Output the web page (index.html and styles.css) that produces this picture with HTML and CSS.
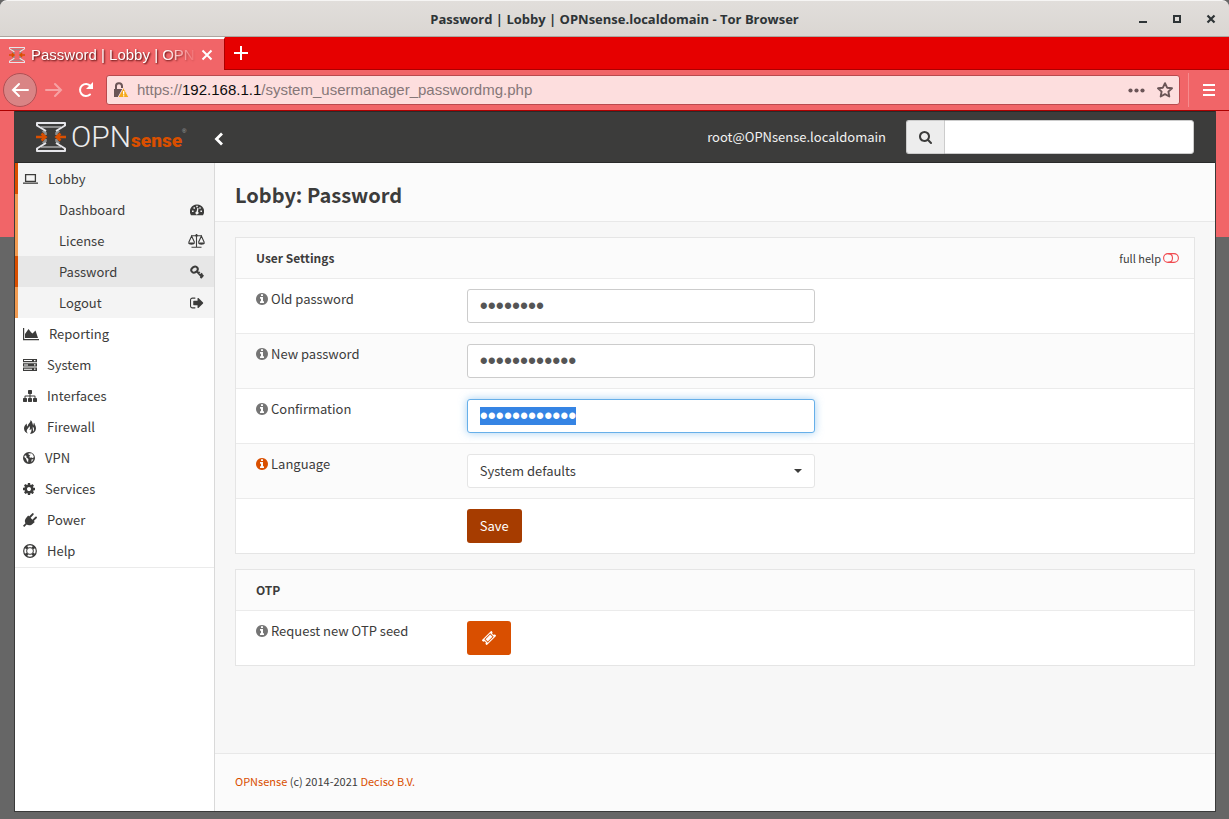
FILE: index.html
```
<!DOCTYPE html>
<html lang="en">
<head>
<meta charset="utf-8">
<meta name="viewport" content="width=device-width, initial-scale=1">
<title>Password | Lobby | OPNsense.localdomain</title>
<link rel="stylesheet" href="styles.css">
</head>
<body>
<svg class="defs" aria-hidden="true">
  <symbol id="mark" viewBox="0 0 30 30">
    <g fill="none">
      <path stroke="#8d8d8d" stroke-width="2" d="M5 5h20M5 25h20"/>
      <path stroke="#8d8d8d" stroke-width="2.600" d="M9.500 13V11L7 8.500M20.500 13V11L23 8.500M9.500 17V19L7 21.500M20.500 17V19l2.500 2.500"/>
      <path stroke="#e6e6ea" stroke-width="2" stroke-linejoin="round" d="M10 9L1 3.500V1h28v2.500L20 9M10 21l-9 5.500V29h28v-2.500L20 21"/>
      <path stroke="#d94f00" stroke-width="2.600" d="M0 15h9M30 15h-9M5.500 11.500L9.500 15l-4 3.500M24.500 11.500l-4 3.500 4 3.500"/>
    </g>
  </symbol>
  <symbol id="info" viewBox="128 128 1536 1536"><path d="M1152 1376v-160q0-14-9-23t-23-9h-96v-512q0-14-9-23t-23-9h-320q-14 0-23 9t-9 23v160q0 14 9 23t23 9h96v320h-96q-14 0-23 9t-9 23v160q0 14 9 23t23 9h448q14 0 23-9t9-23zm-128-896v-160q0-14-9-23t-23-9h-192q-14 0-23 9t-9 23v160q0 14 9 23t23 9h192q14 0 23-9t9-23zm640 416q0 209-103 385.500t-279.500 279.500-385.500 103-385.500-103-279.500-279.500-103-385.500 103-385.500 279.500-279.500 385.500-103 385.500 103 279.500 279.500 103 385.500z"/></symbol>
</svg>

<div class="window">
  <header class="titlebar">
    <span class="titlebar-text">Password | Lobby | OPNsense.localdomain - Tor Browser</span>
    <div class="window-buttons">
      <button aria-label="Minimize"><svg width="10" height="10" viewBox="0 0 10 10"><path d="M1 7h8v2H1z"/></svg></button>
      <button aria-label="Maximize"><svg width="10" height="10" viewBox="0 0 10 10"><path fill-rule="evenodd" d="M1 1h8v8H1zM3 3v4h4V3z"/></svg></button>
      <button aria-label="Close window"><svg width="10" height="10" viewBox="0 0 10 10"><path fill="none" stroke="#2e3436" stroke-width="2.200" d="M1.500 1.500l7 7M8.500 1.500l-7 7"/></svg></button>
    </div>
  </header>

  <div class="tabs">
    <div class="tab">
      <svg width="16" height="16"><use href="#mark"/></svg>
      <span class="tab-title">Password | Lobby | OPN</span>
      <button class="tab-button" aria-label="Close tab"><svg width="12" height="12" viewBox="0 0 12 12"><path d="M1.500 1.500l9 9M10.500 1.500l-9 9"/></svg></button>
    </div>
    <button class="tab-button tab-new" aria-label="New tab"><svg width="14" height="14" viewBox="0 0 14 14"><path d="M7 0v14M0 7h14"/></svg></button>
  </div>

  <nav class="toolbar" aria-label="Browser">
    <button class="tool back" aria-label="Back"><svg width="18" height="16" viewBox="0 0 18 16"><path d="M17 8H2M8 2L2 8l6 6"/></svg></button>
    <button class="tool forward" aria-label="Forward"><svg width="18" height="16" viewBox="0 0 18 16"><path d="M1 8h15M10 2l6 6-6 6"/></svg></button>
    <button class="tool reload" aria-label="Reload"><svg width="16" height="16" viewBox="0 0 16 16"><path d="M12 12.500a6 6 0 1 1 .5-8.500"/><path class="solid" d="M15 0v7H8z"/></svg></button>
    <div class="address">
      <svg width="16" height="16" viewBox="0 0 16 16"><path fill="none" stroke="#6b5557" stroke-width="2" d="M3 8V4.500a3 3 0 0 1 6-.5v2"/><path fill="#6b5557" d="M1 7h9v8H1z"/><path fill="#f5a91b" stroke="#fbdddd" d="M10.500 5.500L16 15.500H5z"/><path fill="#fff" d="M10 9h1.300v3.500H10zM10 13.300h1.300v1.200H10z"/></svg>
      <span class="url">https://<b>192.168.1.1</b>/system_usermanager_passwordmg.php</span>
      <button class="address-button" aria-label="Page actions"><svg width="17" height="5" viewBox="0 0 17 5"><circle cx="2.500" cy="2.500" r="2.100"/><circle cx="8.500" cy="2.500" r="2.100"/><circle cx="14.500" cy="2.500" r="2.100"/></svg></button>
      <button class="address-button" aria-label="Bookmark"><svg width="16" height="16" viewBox="0 0 16 16"><path fill="none" stroke="#6b5557" stroke-width="1.900" stroke-linejoin="round" d="M8 1.200l2.100 4.500 4.900.6-3.600 3.300.9 4.900L8 12.100l-4.300 2.400.9-4.900L1 6.300l4.900-.6z"/></svg></button>
    </div>
    <button class="tool menu" aria-label="Menu"><svg width="12" height="12" viewBox="0 0 12 12"><path d="M0 1h12M0 6h12M0 11h12"/></svg></button>
  </nav>

  <div class="viewport">
    <div class="page">
      <header class="topbar">
        <a class="brand" href="#" aria-label="OPNsense">
          <svg width="30" height="30"><use href="#mark"/></svg>
          <span class="brand-opn">OPN</span><span class="brand-sense">sense</span><sup class="brand-reg">®</sup>
        </a>
        <button class="collapse" aria-label="Collapse menu"><svg width="10" height="14" viewBox="0 0 10 14"><path fill="none" stroke="#fff" stroke-width="2.800" d="M8 1.500L2.500 7 8 12.500"/></svg></button>
        <span class="account">root@OPNsense.localdomain</span>
        <form class="search">
          <label for="search" aria-label="Search"><svg width="13" height="13" viewBox="64 128 1664 1664"><path d="M1216 832q0-185-131.500-316.500t-316.500-131.500-316.500 131.500-131.500 316.500 131.500 316.500 316.500 131.500 316.500-131.500 131.500-316.500zm512 832q0 52-38 90t-90 38q-54 0-90-38l-343-342q-179 124-399 124-143 0-273.500-55.500t-225-150-150-225-55.500-273.500 55.500-273.500 150-225 225-150 273.500-55.500 273.500 55.500 225 150 150 225 55.500 273.500q0 220-124 399l343 343q37 37 37 90z"/></svg></label>
          <input id="search" type="text">
        </form>
      </header>

      <div class="columns">
        <nav class="sidebar" aria-label="Main">
          <a class="item open" href="#"><svg width="15" height="14" viewBox="0 0 15 14"><path fill="none" stroke="#3c3c3b" stroke-width="1.300" d="M2.600 2.600h9.800v6.800H2.600z"/><path d="M0 10.500h15v1.300H0z"/></svg>Lobby</a>
          <div class="submenu">
            <a href="#">Dashboard<svg width="14" height="14" viewBox="0 0 14 14"><path fill-rule="evenodd" d="M7 1.500a7 7 0 0 1 6 10.800H1A7 7 0 0 1 7 1.500zM2 7.500v1.600h1.600V7.500zM3.500 4.300v1.500h1.500V4.300zM6.200 2.700v1.500h1.600V2.700zM10.400 7.500v1.600H12V7.500zM9.300 4.300v1.500h1.400V4.300zM7.300 5L6.600 8.500A1.500 1.500 0 1 0 8 8.800L8.500 5z"/></svg></a>
            <a class="wide" href="#">License<svg width="17" height="14" viewBox="0 0 17 14"><path fill="none" stroke="#3c3c3b" stroke-width="1.100" d="M8.500 0v13M3 1.700h11M3.500 13.300h10M.7 8.500L3.600 2l3 6.500M10.400 8.500l3-6.500 2.900 6.500"/><path d="M0 8.500h7c0 3-7 3-7 0zM10 8.500h7c0 3-7 3-7 0z"/><circle cx="8.500" cy="1.500" r="1.200"/></svg></a>
            <a class="current" href="#">Password<svg width="14" height="14" viewBox="0 0 14 14"><ellipse cx="4.500" cy="4.600" rx="3.400" ry="2.700" transform="rotate(-35 4.500 4.600)" fill="none" stroke="#3c3c3b" stroke-width="2"/><path fill="none" stroke="#3c3c3b" stroke-width="1.900" d="M6.500 6.200l6 6.300M12.200 8.300l-2 2M9.700 7l-1.500 1.500M10.500 13l2.800-3"/></svg></a>
            <a href="#">Logout<svg width="14" height="14" viewBox="64 128 1664 1536"><path d="M704 1440q0 4 1 20t.5 26.500-3 23.500-10 19.500-20.500 6.500h-320q-119 0-203.500-84.500t-84.500-203.500v-704q0-119 84.500-203.500t203.500-84.500h320q13 0 22.500 9.500t9.500 22.500q0 4 1 20t.5 26.500-3 23.500-10 19.500-20.500 6.500h-320q-66 0-113 47t-47 113v704q0 66 47 113t113 47h312l11.500 1 11.500 3 8 5.500 7 9 2 13.500zm928-544q0 26-19 45l-544 544q-19 19-45 19t-45-19-19-45v-288h-448q-26 0-45-19t-19-45v-384q0-26 19-45t45-19h448v-288q0-26 19-45t45-19 45 19l544 544q19 19 19 45z"/></svg></a>
          </div>
          <a class="item" href="#"><svg width="16" height="14" viewBox="0 0 16 14"><path d="M0 1h1.200v11H16v1.200H0zM2 11V7l3.500-5L8 5.200 9.500 6.500 12.500 3.500 15 11z"/></svg>Reporting</a>
          <a class="item" href="#"><svg width="14" height="14" viewBox="0 0 14 14"><path fill-rule="evenodd" d="M0 1h14v3.300H0zM1 2.100v1h8v-1zM11 2v1.200h1.500V2zM0 5.300h14v3.300H0zM1 6.400v1h4v-1zM11 6.300v1.200h1.500V6.300zM0 9.600h14v3.300H0zM1 10.700v1h8v-1zM11 10.600v1.200h1.500v-1.200z"/></svg>System</a>
          <a class="item" href="#"><svg width="14" height="14" viewBox="0 0 1792 1792"><path d="M1792 1248v320q0 40-28 68t-68 28h-320q-40 0-68-28t-28-68v-320q0-40 28-68t68-28h96v-192h-512v192h96q40 0 68 28t28 68v320q0 40-28 68t-68 28h-320q-40 0-68-28t-28-68v-320q0-40 28-68t68-28h96v-192h-512v192h96q40 0 68 28t28 68v320q0 40-28 68t-68 28h-320q-40 0-68-28t-28-68v-320q0-40 28-68t68-28h96v-192q0-52 38-90t90-38h512v-192h-96q-40 0-68-28t-28-68v-320q0-40 28-68t68-28h320q40 0 68 28t28 68v320q0 40-28 68t-68 28h-96v192h512q52 0 90 38t38 90v192h96q40 0 68 28t28 68z"/></svg>Interfaces</a>
          <a class="item" href="#"><svg width="14" height="14" viewBox="0 0 14 14"><path d="M7.500 0C8 2.500 4.500 4 4.700 6.500 3.700 6 3.600 4.700 4 3.500 2 4.700 1 6.500 1 8.500c0 2.800 1.800 4.300 4 5-1-1-1.500-2-1.200-3.300C4.200 8.700 6 8 6.200 6c1 1.200 1 2.600.2 4C7.500 10 8 9.200 8 8.200c1 1.600.5 3.700-1 5.500H8.500c2.600-.8 4.500-2.700 4.500-5.500 0-2.500-1.600-3.500-1.700-5.400-.8.600-1 1.500-.7 2.700C9.300 4.500 9.800 1.500 7.500 0zM9.800 6.500c1.500 1.500 1.700 3.500.2 5.300.2-1.800-.4-3-.2-5.300z"/></svg>Firewall</a>
          <a class="item" href="#"><svg width="12" height="14" viewBox="0 0 12 14"><path fill-rule="evenodd" d="M6 1a6 6 0 1 0 0 12A6 6 0 1 0 6 1zM2 4.200L3.600 5l-.4 1.200L5.400 8l-.3 3.400L3.900 10 3 7.500 1.200 6zM5.500 2.200L9 2.500l1.800 2.700-.6 2-1.600-.8-1.800.3-.4-1.600 1.200-1.300-1.800.2zM8.500 8.600l2-.4-2 3z"/></svg>VPN</a>
          <a class="item" href="#"><svg width="12" height="12" viewBox="128 128 1536 1536"><path d="M1152 896q0-106-75-181t-181-75-181 75-75 181 75 181 181 75 181-75 75-181zm512-109v222q0 12-8 23t-20 13l-185 28q-19 54-39 91 35 50 107 138 10 12 10 25t-9 23q-27 37-99 108t-94 71q-12 0-26-9l-138-108q-44 23-91 38-16 136-29 186-7 28-36 28h-222q-14 0-24.500-8.500t-11.500-21.500l-28-184q-49-16-90-37l-141 107q-10 9-25 9-14 0-25-11-126-114-165-168-7-10-7-23 0-12 8-23 15-21 51-66.500t54-70.500q-27-50-41-99l-183-27q-13-2-21-12.500t-8-23.500v-222q0-12 8-23t19-13l186-28q14-46 39-92-40-57-107-138-10-12-10-24 0-10 9-23 26-36 98.500-107.500t94.500-71.500q13 0 26 10l138 107q44-23 91-38 16-136 29-186 7-28 36-28h222q14 0 24.500 8.500t11.500 21.500l28 184q49 16 90 37l142-107q9-9 24-9 13 0 25 10 129 119 165 170 7 8 7 22 0 12-8 23-15 21-51 66.500t-54 70.500q26 50 41 98l183 28q13 2 21 12.500t8 23.500z"/></svg>Services</a>
          <a class="item" href="#"><svg width="14" height="14" viewBox="0 0 14 14"><path d="M3.500 4.500l6.300 6.200C8 12.600 5.300 12.600 3.700 11.500L1.200 14 0 12.800l2.500-2.500C1.500 8.500 1.600 6.300 3.500 4.500zM3.500 4.500l1.700-2 6.600 6.500-2 1.700z"/><path fill="none" stroke="#3c3c3b" stroke-width="1.900" stroke-linecap="round" d="M6.500 4.500l3.300-3.400M9.800 7.700l3.200-3.200"/></svg>Power</a>
          <a class="item" href="#"><svg width="14" height="14" viewBox="0 0 14 14"><g fill="none" stroke="#3c3c3b"><circle cx="7" cy="7" r="6.300" stroke-width="1.200"/><circle cx="7" cy="7" r="3.400" stroke-width="1"/><path stroke-width="3" d="M2.500 2.500l2 2M11.500 2.500l-2 2M2.500 11.500l2-2M11.500 11.500l-2-2"/></g></svg>Help</a>
        </nav>

        <main class="main">
          <header class="page-head"><h1>Lobby: Password</h1></header>
          <form class="content">
            <section class="card">
              <header class="card-head">
                <h2>User Settings</h2>
                <a class="full-help" href="#">full help<svg width="16" height="10" viewBox="0 0 16 10"><g fill="none" stroke="#f04b50" stroke-width="1.100"><rect x=".6" y=".6" width="14.800" height="8.800" rx="4.400"/><path d="M5 .6c6 0 6 8.800 0 8.800"/></g></svg></a>
              </header>
              <div class="row">
                <label for="old"><svg class="info" width="12" height="12"><use href="#info"/></svg>Old password</label>
                <div class="field"><input id="old" type="password" value="opnsense"></div>
              </div>
              <div class="row">
                <label for="new"><svg class="info" width="12" height="12"><use href="#info"/></svg>New password</label>
                <div class="field"><input id="new" type="password" value="opnsense2021"></div>
              </div>
              <div class="row">
                <label for="confirm"><svg class="info" width="12" height="12"><use href="#info"/></svg>Confirmation</label>
                <div class="field"><input id="confirm" type="password" value="opnsense2021"></div>
              </div>
              <div class="row">
                <label for="language"><svg class="info available" width="12" height="12"><use href="#info"/></svg>Language</label>
                <div class="select">
                  <select id="language"><option>System defaults</option></select>
                  <svg width="8" height="4" viewBox="0 0 8 4"><path d="M0 0h8L4 4z"/></svg>
                </div>
              </div>
              <div class="row">
                <span></span>
                <button class="button pressed" type="button">Save</button>
              </div>
            </section>
            <section class="card">
              <header class="card-head"><h2>OTP</h2></header>
              <div class="row">
                <label for="otp"><svg class="info" width="12" height="12"><use href="#info"/></svg>Request new OTP seed</label>
                <button class="button ticket" id="otp" type="button"><svg width="14" height="14" viewBox="0 0 14 14"><g transform="rotate(-45 7 7)"><path fill="#fff" fill-rule="evenodd" d="M.3 3.500h13.400v2a1.500 1.500 0 0 0 0 3v2H.3v-2a1.500 1.500 0 0 0 0-3zM2.800 4.600v4.800h8.400V4.600z"/><path fill="#fff" d="M3.700 5.400h6.600v3.200H3.700z"/></g></svg></button>
              </div>
            </section>
          </form>
          <footer class="footer"><a href="#">OPNsense</a> (c) 2014-2021 <a href="#">Deciso B.V.</a></footer>
        </main>
      </div>
    </div>
  </div>
</div>
<script src="page.js"></script>
</body>
</html>
```

FILE: styles.css
```
* { box-sizing: border-box; }

body {
  margin: 0;
  background: #666;
  color: #3c3c3b;
  font: 13px/20px "Noto Sans CJK SC", "Noto Sans", sans-serif;
}

button, input, select { font: inherit; color: inherit; }
button { border: 0; padding: 0; background: none; display: flex; align-items: center; justify-content: center; }
a { color: inherit; text-decoration: none; }
svg { flex: none; fill: #3c3c3b; }
h1, h2 { margin: 0; }
.defs { display: none; }

.window { min-height: 100vh; display: flex; flex-direction: column; }

/* Window frame */
.titlebar {
  height: 37px;
  display: grid;
  grid-template-columns: 1fr auto 1fr;
  align-items: center;
  padding: 0 13px;
  border-top: 1px solid #f6f5f4;
  border-bottom: 1px solid #aca69f;
  border-radius: 7px 7px 0 0;
  background: linear-gradient(#e1dedb, #dad6d2);
}
.titlebar-text { grid-column: 2; font: bold 13px/20px "Open Sans", sans-serif; color: #2e3436; }
.window-buttons { display: flex; justify-content: flex-end; gap: 24px; }
.window-buttons svg { fill: #2e3436; }

.tabs { height: 33px; display: flex; background: #e60000; border-bottom: 1px solid #ad0000; }
.tab {
  width: 225px;
  height: 33px;
  display: flex;
  align-items: center;
  padding: 0 11px 0 9px;
  background: #f16568;
  border-top: 2px solid #fff;
  border-right: 1px solid #ad0000;
}
.tab-title {
  flex: 1;
  margin: 0 4px 0 6px;
  white-space: nowrap;
  color: #fff;
  font: 15px/20px "Liberation Sans", sans-serif;
  text-shadow: 1px 1px 2px #400;
  mask-image: linear-gradient(90deg, #000 80%, transparent);
}
.tab-button svg { fill: none; stroke: #fff; stroke-width: 2; }
.tab-new { padding: 0 9px; }

.toolbar {
  height: 41px;
  display: flex;
  align-items: center;
  padding: 0 0 0 3px;
  background: #f16568;
  border-bottom: 1px solid #ad0000;
}
.tool { width: 33px; height: 34px; }
.tool svg { fill: none; stroke: #fff; stroke-width: 2; stroke-linecap: round; }
.tool .solid { fill: #fff; stroke: none; }
.back { width: 34px; border: 1px solid #b05054; border-radius: 50%; background: #d98485; }
.forward { opacity: .4; }
.reload { width: 31px; margin-right: 5px; }
.menu { width: 41px; border-left: 1px solid #f68b8d; }
.menu svg { stroke-linecap: butt; }
.address {
  flex: 1;
  height: 30px;
  display: flex;
  align-items: center;
  margin-right: 8px;
  padding: 0 6px;
  border: 1px solid #b94a4e;
  border-radius: 3px;
  background: #fddede;
}
.url { flex: 1; margin-left: 8px; font: 15px/20px "Liberation Sans", sans-serif; color: #857778; white-space: nowrap; }
.url b { font-weight: normal; color: #0c0c0d; }
.address-button { margin-left: 12px; }
.address-button svg { fill: #6b5557; }

.viewport { flex: 1; display: flex; padding: 0 13px 7px 14px; background: linear-gradient(#f16568 126px, #666 126px); }
.page { flex: 1; display: flex; flex-direction: column; border: solid #3a3a3a; border-width: 0 1px 1px; background: #f7f7f7; }

/* Application header */
.topbar { height: 52px; display: flex; align-items: center; padding: 0 21px; background: #3c3c3b; border: solid #2a2a2a; border-width: 1px 0; }
.brand { display: flex; align-items: baseline; white-space: nowrap; }
.brand svg { align-self: center; }
.brand-opn { margin-left: 5px; font: 300 30px/30px Roboto, sans-serif; color: #ededed; }
.brand-sense { font: 900 19px/20px Roboto, sans-serif; color: #d94f00; }
.brand-reg { align-self: flex-start; font: 6px/18px "Liberation Sans", sans-serif; color: #aaa; }
.collapse { margin: 4px 0 0 28px; }
.account { margin-left: auto; color: #f2f2f2; }
.search { display: flex; height: 34px; margin-left: 20px; }
.search label { width: 38px; display: flex; align-items: center; justify-content: center; background: #ededed; border: 1px solid #ccc; border-right: 0; border-radius: 3px 0 0 3px; }
.search input { width: 250px; border: 1px solid #ccc; border-radius: 0 3px 3px 0; background: #fff; padding: 6px 12px; }

.columns { flex: 1; display: flex; }

/* Menu */
.sidebar { width: 200px; background: #fff; border-right: 1px solid #d9d9d9; }
.item { height: 31px; display: flex; align-items: center; gap: 10px; padding-left: 8px; }
.item:last-child { height: 33px; padding-bottom: 1px; border-bottom: 1px solid #ebebeb; }
.open { border-left: 3px solid #d94f00; padding-left: 5px; background: #f4f4f4; }
.submenu { background: #f4f4f4; }
.submenu a { height: 31px; display: flex; align-items: center; justify-content: space-between; padding: 0 10px 0 41px; border-left: 3px solid #f19a50; }
.submenu .wide { padding-right: 9px; }
.submenu .current { background: #e7e7e7; border-color: #d94f00; }

/* Page */
.main { flex: 1; display: flex; flex-direction: column; }
.page-head { height: 59px; padding: 17px 20px; background: #fbfbfb; border-bottom: 1px solid #e8e8e8; }
h1 { font-size: 20px; line-height: 30px; font-weight: 700; }
.content { flex: 1; padding: 15px 20px 0; }
.card { margin-bottom: 15px; border: 1px solid #e5e5e5; background: #fff; }
.card-head { height: 40px; display: flex; align-items: center; justify-content: space-between; padding: 0 15px 0 20px; background: #fbfbfb; }
h2 { font-size: 12px; line-height: 20px; font-weight: 700; }
.full-help { display: flex; align-items: center; gap: 2px; font-size: 11px; }
.row { min-height: 55px; display: grid; grid-template-columns: 22% 1fr; column-gap: 20px; align-items: start; padding: 10px 0; border-top: 1px solid #ebebeb; }
.row:nth-child(odd) { background: #fbfbfb; }
.row label { display: flex; align-items: center; gap: 3px; padding-left: 20px; }
.info { fill: #757575; }
.available { fill: #d94f00; }
.field, select { width: 100%; max-width: 348px; height: 34px; border: 1px solid #ccc; border-radius: 3px; background: #fff; outline: 0; }
.field { display: flex; padding: 7px 12px; }
.field input { flex: 1; min-width: 0; height: 18px; padding: 0; border: 0; outline: 0; overflow: hidden; background: none; font: 23px/18px "Liberation Sans", sans-serif; color: #555; }
.field:focus-within { border-color: #66afe9; box-shadow: 0 0 8px rgba(102, 175, 233, .6); }
.field input::selection { background: #3584e4; color: #fff; }
.select { display: grid; align-items: center; max-width: 348px; }
.select > * { grid-area: 1 / 1; }
.select svg { justify-self: end; margin-right: 13px; pointer-events: none; }
select { appearance: none; padding: 6px 12px; border-color: #e5e5e5; }
.button { justify-self: start; height: 34px; padding: 0 13px; border-radius: 3px; background: #d94f00; color: #fff; }
.pressed { background: #a63c00; }
.ticket { padding: 0 15px; }

.footer { height: 58px; padding: 17px 20px; background: #fbfbfb; border-top: 1px solid #e8e8e8; font-size: 11px; }
.footer a { color: #d94f00; }
```

FILE: page.js
```
const confirmation = document.getElementById('confirm');
confirmation.focus();
confirmation.select();
```
